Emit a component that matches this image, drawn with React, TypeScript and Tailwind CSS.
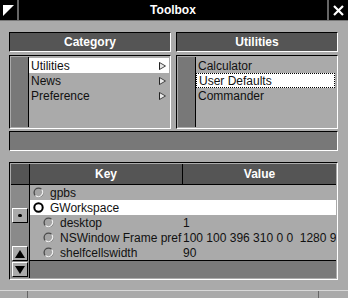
import React from 'react';

const font = "font-['Liberation_Sans',Arial,sans-serif]";

const Arrow: React.FC = () => (
  <svg width="7" height="8" viewBox="0 0 7 8" className="shrink-0">
    <polygon points="0.5,0.5 6.5,4 0.5,7.5" fill="#e8e8e8" stroke="#444" strokeWidth="1" />
    <polyline points="0.5,7.5 0.5,0.5" stroke="#222" strokeWidth="1" fill="none" />
  </svg>
);

const Radio: React.FC<{ on?: boolean }> = ({ on }) =>
  on ? (
    <svg width="11" height="11" viewBox="0 0 11 11" className="shrink-0">
      <circle cx="5.5" cy="5.5" r="4.2" fill="white" stroke="black" strokeWidth="2" />
    </svg>
  ) : (
    <svg width="11" height="11" viewBox="0 0 11 11" className="shrink-0">
      <circle cx="5.5" cy="5.5" r="4.4" fill="#a4a4a4" stroke="#4a4a4a" strokeWidth="1.3" />
      <path d="M2.4 8.6 A4.4 4.4 0 0 0 8.6 2.4" fill="none" stroke="#f4f4f4" strokeWidth="1.3" />
    </svg>
  );

// sunken frame used by the headers, lists and fields
const sunken = 'border border-t-black border-l-black border-b-white border-r-white';

const categories = ['Utilities', 'News', 'Preference'];
const tools = ['Calculator', 'User Defaults', 'Commander'];

const rows = [
  { key: 'gpbs', value: '', depth: 0 },
  { key: 'GWorkspace', value: '', depth: 0, on: true },
  { key: 'desktop', value: '1', depth: 1 },
  { key: 'NSWindow Frame pref', value: '100 100 396 310 0 0  1280 960', depth: 1 },
  { key: 'shelfcellswidth', value: '90', depth: 1 },
];

const BevelButton: React.FC<{ children?: React.ReactNode }> = ({ children }) => (
  <div className="w-[16px] h-[15px] bg-[#aaa] border border-t-white border-l-white border-b-black border-r-black flex items-center justify-center">
    {children}
  </div>
);

export default function App() {
  return (
    <div className={`w-[348px] h-[298px] bg-[#aaaaaa] flex flex-col overflow-hidden ${font} text-[12px] leading-none text-[#111]`}>
      {/* title bar */}
      <div className="h-[21px] bg-black flex border-b border-[#777]">
        <div className="w-[19px] flex items-center justify-center border-r-2 border-[#666]">
          <svg width="11" height="11" viewBox="0 0 11 11">
            <polygon points="0,0 11,0 0,11" fill="white" />
          </svg>
        </div>
        <div className="flex-1 flex items-center justify-center text-white font-bold text-[12px]">Toolbox</div>
        <div className="w-[21px] flex items-center justify-center border-l-2 border-[#666]">
          <svg width="11" height="11" viewBox="0 0 11 11">
            <path d="M1 1 L10 10 M10 1 L1 10" stroke="white" strokeWidth="2.2" />
          </svg>
        </div>
      </div>

      <div className="pl-[9px] pr-[10px] pt-[11px] flex flex-col">
        <div className="flex gap-[5px]">
          {/* category browser column */}
          <div className="w-[162px] flex flex-col gap-[3px]">
            <div className={`h-[20px] bg-[#555] ${sunken} flex items-center justify-center text-white font-bold`}>Category</div>
            <div className={`h-[74px] ${sunken} flex p-px`}>
              <div className="w-[18px] bg-[#787878] border-r border-black" />
              <div className="flex-1 flex flex-col pt-px">
                {categories.map((c, i) => (
                  <div key={c} className={`h-[15px] flex items-center justify-between pl-[2px] pr-[3px] ${i === 0 ? 'bg-white' : ''}`}>
                    <span>{c}</span>
                    <Arrow />
                  </div>
                ))}
              </div>
            </div>
          </div>
          {/* tools column */}
          <div className="w-[162px] flex flex-col gap-[3px]">
            <div className={`h-[20px] bg-[#555] ${sunken} flex items-center justify-center text-white font-bold`}>Utilities</div>
            <div className={`h-[74px] ${sunken} flex p-px`}>
              <div className="w-[18px] bg-[#787878] border-r border-black" />
              <div className="flex-1 flex flex-col pt-px">
                {tools.map((t, i) => (
                  <div
                    key={t}
                    className={`h-[15px] flex items-center pl-[2px] ${i === 1 ? 'bg-white border border-dotted border-black mr-px' : ''}`}
                  >
                    {t}
                  </div>
                ))}
              </div>
            </div>
          </div>
        </div>

        <div className={`mt-[2px] h-[20px] bg-[#787878] ${sunken}`} />

        {/* defaults table */}
        <div className={`mt-[11px] h-[118px] ${sunken} p-px flex flex-col`}>
          <div className="h-[21px] flex bg-[#555] border-b border-black text-white font-bold">
            <div className="w-[19px] border-r border-black" />
            <div className="w-[153px] flex items-center justify-center border-r border-black">Key</div>
            <div className="flex-1 flex items-center justify-center">Value</div>
          </div>
          <div className="flex-1 flex min-h-0">
            {/* vertical scroller */}
            <div className="w-[19px] bg-[#8a8a8a] border-r border-black flex flex-col items-center pt-[23px] pb-px">
              <BevelButton>
                <div className="w-[4px] h-[3px] rounded-full bg-black" />
              </BevelButton>
              <div className="flex-1" />
              <BevelButton>
                <svg width="10" height="8" viewBox="0 0 10 8"><polygon points="5,0 10,8 0,8" fill="black" /></svg>
              </BevelButton>
              <div className="h-[1px]" />
              <BevelButton>
                <svg width="10" height="8" viewBox="0 0 10 8"><polygon points="0,0 10,0 5,8" fill="black" /></svg>
              </BevelButton>
            </div>
            <div className="flex-1 flex flex-col min-w-0">
              <div className="flex-1 overflow-hidden min-h-0">
                {rows.map((r) => (
                  <div key={r.key} className={`h-[15px] flex items-center ${r.on ? 'bg-white' : ''}`}>
                    <div className={`w-[152px] shrink-0 flex items-center gap-[6px] ${r.depth ? 'pl-[13px]' : 'pl-[3px]'}`}>
                      <Radio on={r.on} />
                      <span className="whitespace-nowrap">{r.key}</span>
                    </div>
                    <div className="flex-1 pl-[1px] whitespace-pre overflow-hidden">{r.value}</div>
                  </div>
                ))}
              </div>
              <div className="h-[18px] bg-[#7a7a7a] border-t border-black" />
            </div>
          </div>
        </div>
      </div>

      {/* bottom resize bar */}
      <div className="mt-[10px] h-[8px] flex border-t border-[#d8d8d8]">
        <div className="w-[28px] border-r border-[#666]" />
        <div className="w-[291px] border-r border-[#666]" />
        <div className="flex-1" />
      </div>
    </div>
  );
}
